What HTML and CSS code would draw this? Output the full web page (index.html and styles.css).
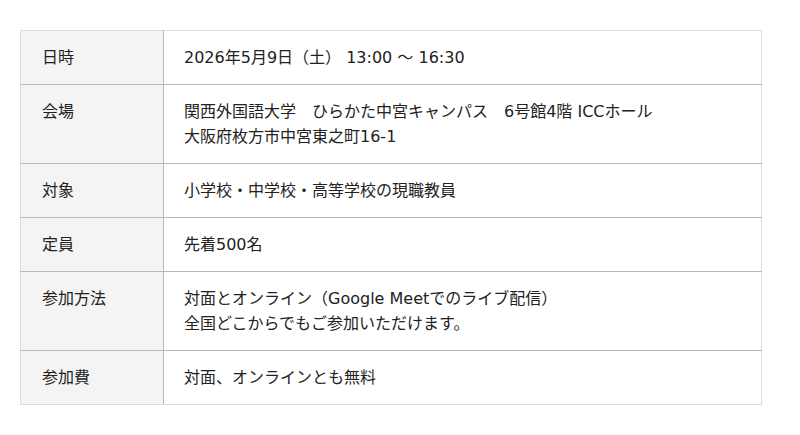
FILE: index.html
```html
<!DOCTYPE html>
<html lang="ja">
<head>
<meta charset="utf-8">
<link rel="stylesheet" href="styles.css">
</head>
<body>
<div class="page">
<table class="info">
<tr><th>日時</th><td>2026年5月9日（土） 13:00 〜 16:30</td></tr>
<tr><th>会場</th><td>関西外国語大学　ひらかた中宮キャンパス　6号館4階 ICCホール<br>大阪府枚方市中宮東之町16-1</td></tr>
<tr><th>対象</th><td>小学校・中学校・高等学校の現職教員</td></tr>
<tr><th>定員</th><td>先着500名</td></tr>
<tr><th>参加方法</th><td>対面とオンライン（Google Meetでのライブ配信）<br>全国どこからでもご参加いただけます。</td></tr>
<tr><th>参加費</th><td>対面、オンラインとも無料</td></tr>
</table>
</div>
</body>
</html>
```
FILE: styles.css
```css
html, body { margin: 0; padding: 0; background: #fff; }
.page { padding: 30px 38px 0 20px; }
.info {
  width: 742px;
  border-collapse: collapse;
  border: 1px solid #dcdcdc;
  font-family: "DejaVu Sans", "Noto Sans CJK JP", sans-serif;
  font-size: 16px;
  line-height: 25px;
  color: #222;
}
.info th, .info td {
  padding: 14px 20px;
  border-bottom: 1px solid #b8b8b8;
  text-align: left;
  vertical-align: top;
  font-weight: normal;
}
.info tr:last-child th, .info tr:last-child td { border-bottom: 1px solid #dcdcdc; }
.info th {
  width: 101px;
  background: #f4f4f4;
  border-right: 1px solid #b8b8b8;
  padding-left: 21px;
}
```
